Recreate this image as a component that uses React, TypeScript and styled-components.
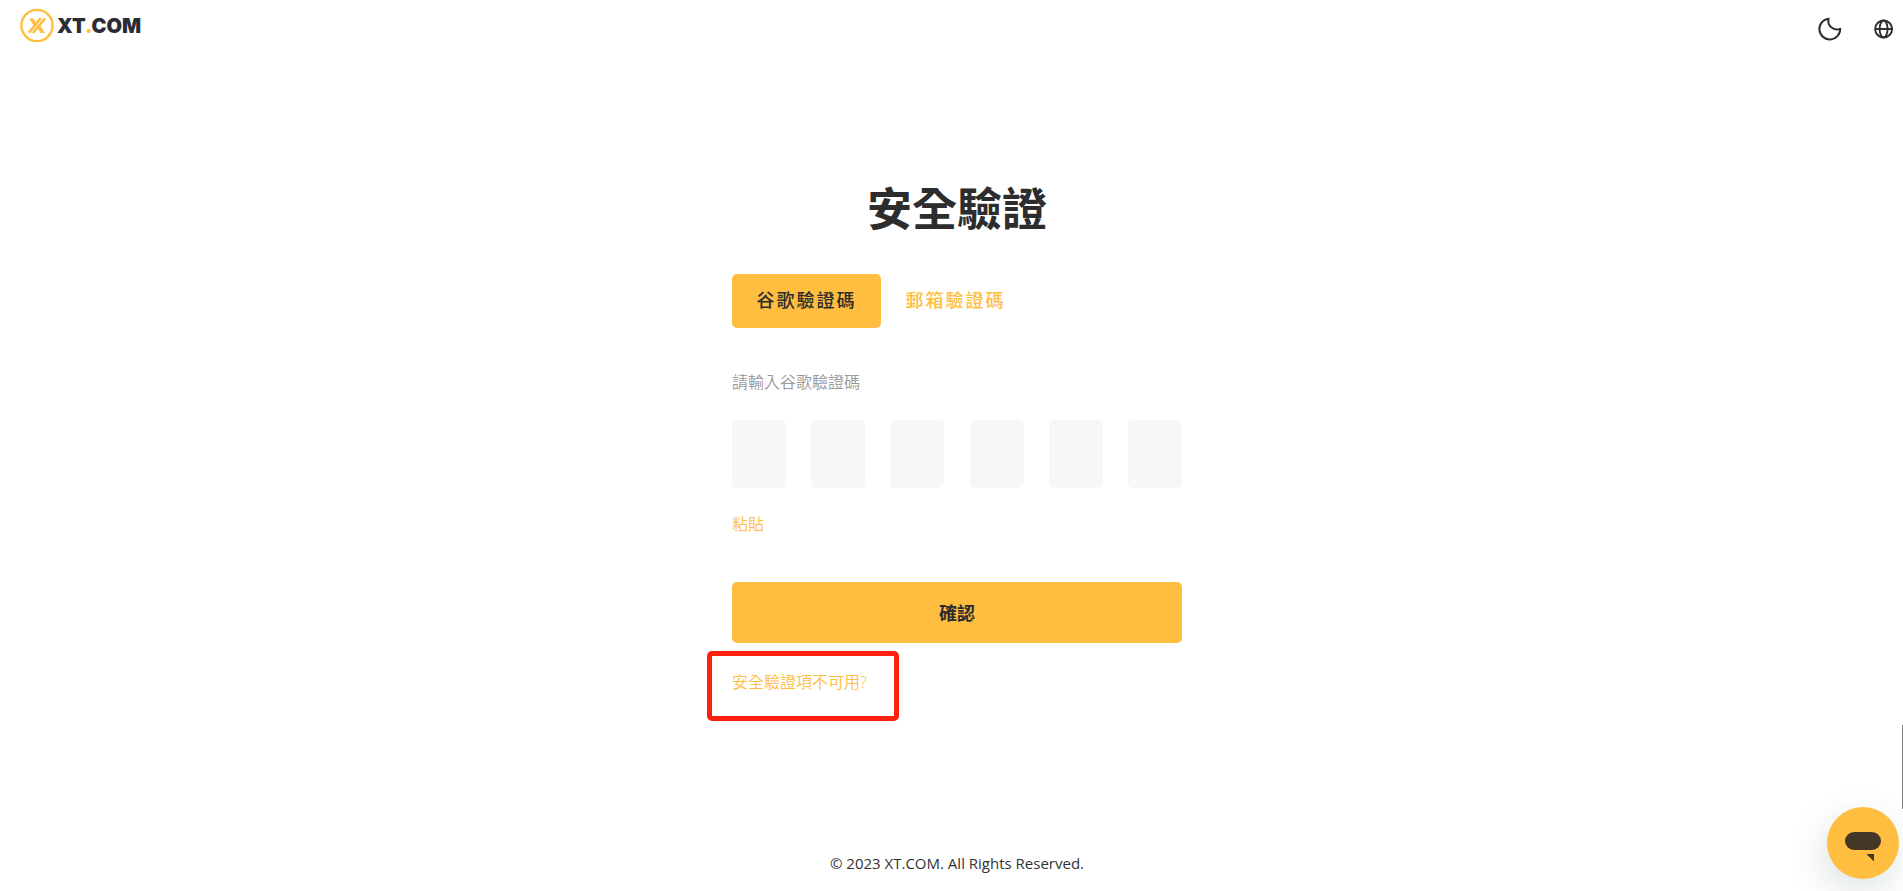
import React from "react";
import styled, { createGlobalStyle } from "styled-components";

const GlobalStyle = createGlobalStyle`
  *, *::before, *::after { box-sizing: border-box; }
  body {
    margin: 0;
    background: #ffffff;
    color: #2d2d2d;
    font-family: "Open Sans", "Noto Sans CJK TC", sans-serif;
    overflow-x: hidden;
  }
  button, input { font: inherit; color: inherit; border: 0; padding: 0; background: none; }
  button { cursor: pointer; }
  a { text-decoration: none; }
`;

const Page = styled.div`
  min-height: 100vh;
  display: flex;
  flex-direction: column;
`;

const Header = styled.header`
  display: flex;
  justify-content: space-between;
  align-items: flex-start;
  height: 56px;
  padding: 8px 9px 0 19px;
`;

const Logo = styled.a`
  display: flex;
  align-items: center;
  gap: 3px;
  height: 35px;
  color: #2b2c33;
  font-family: Inter, sans-serif;
  font-size: 20px;
  line-height: 24px;
  font-weight: 900;
  svg { display: block; }
`;

const LogoDot = styled.span`
  color: #ffbe40;
`;

const Tools = styled.div`
  display: flex;
  align-items: center;
  gap: 31px;
  padding-top: 9px;
`;

const IconButton = styled.button`
  display: block;
  height: 24px;
  svg { display: block; }
`;

const Main = styled.main`
  box-sizing: content-box;
  width: 450px;
  margin: 0 auto;
  padding-left: 11px;
`;

const Title = styled.h1`
  margin: 120px 0 32px;
  font-size: 45px;
  line-height: 66px;
  font-weight: 700;
  text-align: center;
`;

const Tabs = styled.div`
  display: flex;
`;

const Tab = styled.button<{ $active?: boolean }>`
  height: 54px;
  min-width: 149px;
  padding: 0 24px 4px;
  border-radius: 5px;
  font-size: 18px;
  font-weight: 500;
  letter-spacing: 2px;
  background: ${(p) => (p.$active ? "#ffbe40" : "transparent")};
  color: ${(p) => (p.$active ? "#2d2d2d" : "#ffbe40")};
`;

const Fieldset = styled.fieldset`
  margin: 42px 0 0;
  padding: 0;
  border: 0;
`;

const Legend = styled.legend`
  padding: 0;
  margin-bottom: 26px;
  color: #999999;
  font-size: 16px;
  line-height: 24px;
  font-weight: 350;
`;

const Digits = styled.div`
  display: flex;
  justify-content: space-between;
`;

const Digit = styled.input`
  width: 54px;
  height: 68px;
  border-radius: 5px;
  background: #f7f7f7;
  font-size: 24px;
  text-align: center;
`;

const PasteButton = styled.button`
  display: block;
  margin-top: 24px;
  color: #ffbe40;
  font-size: 16px;
  line-height: 24px;
  font-weight: 350;
`;

const Confirm = styled.button`
  display: block;
  width: 100%;
  height: 61px;
  margin-top: 46px;
  padding-bottom: 2px;
  border-radius: 5px;
  background: #ffbe40;
  font-size: 18px;
  font-weight: 700;
`;

const HelpLine = styled.div`
  display: flex;
  margin-top: 27px;
`;

const HelpLink = styled.a`
  position: relative;
  color: #ffbe40;
  font-size: 16px;
  line-height: 24px;
  font-weight: 350;
`;

const Highlight = styled.span`
  position: absolute;
  inset: -19px -32px -27px -25px;
  border: 5px solid #ff1f0f;
  border-radius: 5px;
  pointer-events: none;
`;

const Footer = styled.footer`
  margin-top: auto;
  padding: 24px 0 16px 11px;
  color: #333333;
  font-size: 15px;
  line-height: 24px;
  text-align: center;
`;

const ChatButton = styled.button`
  position: fixed;
  right: 4px;
  bottom: 12px;
  width: 72px;
  height: 72px;
  border-radius: 50%;
  background: #ffbe40;
  box-shadow: -4px 12px 36px rgba(35, 75, 85, 0.16);
  svg { display: block; }
`;

const ScrollThumb = styled.div`
  position: fixed;
  right: 0;
  bottom: 82px;
  width: 1px;
  height: 84px;
  background: #858585;
`;

function LogoMark() {
  return (
    <svg width="35" height="35" viewBox="0 0 35 35" fill="none" aria-hidden="true">
      <circle cx="18" cy="17.5" r="15.6" stroke="#ffbe40" strokeWidth="2.4" />
      <path d="M10 10.5h4.6l2.4 4.2-2.2 3zM26 25h-4.6l-2.4-4.4 2.2-3z" fill="#ffbe40" />
      <path d="M21.8 10 10 24.6M26 10.4 14 25" stroke="#ffbe40" strokeWidth="2.6" />
    </svg>
  );
}

function Moon() {
  return (
    <svg width="26" height="24" viewBox="0 0 26 24" fill="none" stroke="#2d2d2d" strokeWidth="2" strokeLinejoin="round" aria-hidden="true">
      <path d="M11.6 1.7A10.4 10.4 0 1 0 23.2 11.8A8.6 8.6 0 0 1 11.6 1.7Z" />
    </svg>
  );
}

function Globe() {
  return (
    <svg width="20" height="24" viewBox="0 0 20 24" fill="none" stroke="#2d2d2d" strokeWidth="1.9" aria-hidden="true">
      <circle cx="9.6" cy="12" r="8.5" />
      <ellipse cx="9.6" cy="12" rx="4" ry="8.5" />
      <path d="M1.1 12h17" />
    </svg>
  );
}

const DIGITS = [1, 2, 3, 4, 5, 6];

export default function App() {
  return (
    <Page>
      <GlobalStyle />
      <Header>
        <Logo href="#">
          <LogoMark />
          <span>XT<LogoDot>.</LogoDot>COM</span>
        </Logo>
        <Tools>
          <IconButton type="button" aria-label="深色模式"><Moon /></IconButton>
          <IconButton type="button" aria-label="語言"><Globe /></IconButton>
        </Tools>
      </Header>
      <Main>
        <Title>安全驗證</Title>
        <Tabs>
          <Tab type="button" $active>谷歌驗證碼</Tab>
          <Tab type="button">郵箱驗證碼</Tab>
        </Tabs>
        <Fieldset>
          <Legend>請輸入谷歌驗證碼</Legend>
          <Digits>
            {DIGITS.map((n) => (
              <Digit key={n} type="text" inputMode="numeric" maxLength={1} aria-label={`驗證碼 ${n}`} />
            ))}
          </Digits>
        </Fieldset>
        <PasteButton type="button">粘貼</PasteButton>
        <Confirm type="button">確認</Confirm>
        <HelpLine>
          <HelpLink href="#">
            安全驗證項不可用?
            <Highlight />
          </HelpLink>
        </HelpLine>
      </Main>
      <Footer>© 2023 XT.COM. All Rights Reserved.</Footer>
      <ScrollThumb />
      <ChatButton type="button" aria-label="客服">
        <svg width="72" height="72" viewBox="0 0 72 72" fill="#443726" aria-hidden="true">
          <rect x="18" y="25" width="36" height="18" rx="9" />
          <path d="M39.5 47H47v7.5z" />
        </svg>
      </ChatButton>
    </Page>
  );
}
